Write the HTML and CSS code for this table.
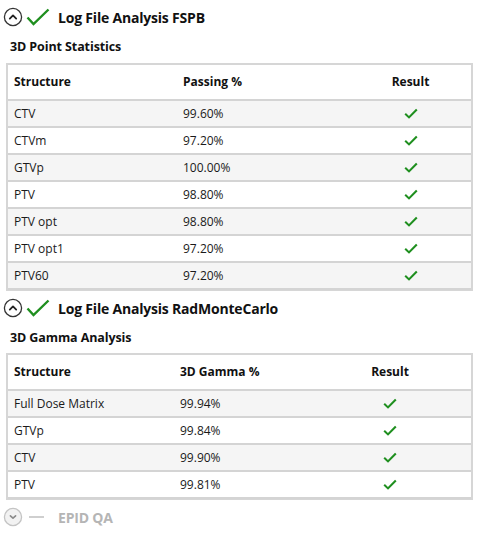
FILE: index.html
```html
<!DOCTYPE html>
<html>
<head>
<meta charset="utf-8">
<link rel="stylesheet" href="styles.css">
</head>
<body>
<div class="page">
  <div class="section-head">
    <svg class="toggle" width="20" height="20" viewBox="0 0 20 20"><circle cx="10" cy="10" r="8.6" fill="none" stroke="#333" stroke-width="1.3"/><path d="M6.8 11.6 L10 8.4 L13.2 11.6" fill="none" stroke="#222" stroke-width="1.8" stroke-linecap="round" stroke-linejoin="round"/></svg>
    <svg class="bigcheck" width="24" height="18" viewBox="0 0 24 18"><path d="M1.5 9.5 L7.5 16 L22.5 1.5" fill="none" stroke="#1f8f1f" stroke-width="2.4"/></svg>
    <span class="title">Log File Analysis FSPB</span>
  </div>
  <div class="subtitle">3D Point Statistics</div>
  <div class="table t1">
    <div class="row head"><div class="c1">Structure</div><div class="c2">Passing %</div><div class="c3">Result</div></div>
    <div class="row"><div class="c1">CTV</div><div class="c2">99.60%</div><div class="c3"><svg class="chk" width="14" height="11" viewBox="0 0 14 11"><path d="M1.2 5.8 L5 9.4 L12.8 1.4" fill="none" stroke="#1f8f1f" stroke-width="2.1"/></svg></div></div>
    <div class="row"><div class="c1">CTVm</div><div class="c2">97.20%</div><div class="c3"><svg class="chk" width="14" height="11" viewBox="0 0 14 11"><path d="M1.2 5.8 L5 9.4 L12.8 1.4" fill="none" stroke="#1f8f1f" stroke-width="2.1"/></svg></div></div>
    <div class="row"><div class="c1">GTVp</div><div class="c2">100.00%</div><div class="c3"><svg class="chk" width="14" height="11" viewBox="0 0 14 11"><path d="M1.2 5.8 L5 9.4 L12.8 1.4" fill="none" stroke="#1f8f1f" stroke-width="2.1"/></svg></div></div>
    <div class="row"><div class="c1">PTV</div><div class="c2">98.80%</div><div class="c3"><svg class="chk" width="14" height="11" viewBox="0 0 14 11"><path d="M1.2 5.8 L5 9.4 L12.8 1.4" fill="none" stroke="#1f8f1f" stroke-width="2.1"/></svg></div></div>
    <div class="row"><div class="c1">PTV opt</div><div class="c2">98.80%</div><div class="c3"><svg class="chk" width="14" height="11" viewBox="0 0 14 11"><path d="M1.2 5.8 L5 9.4 L12.8 1.4" fill="none" stroke="#1f8f1f" stroke-width="2.1"/></svg></div></div>
    <div class="row"><div class="c1">PTV opt1</div><div class="c2">97.20%</div><div class="c3"><svg class="chk" width="14" height="11" viewBox="0 0 14 11"><path d="M1.2 5.8 L5 9.4 L12.8 1.4" fill="none" stroke="#1f8f1f" stroke-width="2.1"/></svg></div></div>
    <div class="row"><div class="c1">PTV60</div><div class="c2">97.20%</div><div class="c3"><svg class="chk" width="14" height="11" viewBox="0 0 14 11"><path d="M1.2 5.8 L5 9.4 L12.8 1.4" fill="none" stroke="#1f8f1f" stroke-width="2.1"/></svg></div></div>
  </div>

  <div class="section-head second">
    <svg class="toggle" width="20" height="20" viewBox="0 0 20 20"><circle cx="10" cy="10" r="8.6" fill="none" stroke="#333" stroke-width="1.3"/><path d="M6.8 11.6 L10 8.4 L13.2 11.6" fill="none" stroke="#222" stroke-width="1.8" stroke-linecap="round" stroke-linejoin="round"/></svg>
    <svg class="bigcheck" width="24" height="18" viewBox="0 0 24 18"><path d="M1.5 9.5 L7.5 16 L22.5 1.5" fill="none" stroke="#1f8f1f" stroke-width="2.4"/></svg>
    <span class="title">Log File Analysis RadMonteCarlo</span>
  </div>
  <div class="subtitle">3D Gamma Analysis</div>
  <div class="table t2">
    <div class="row head"><div class="c1">Structure</div><div class="c2">3D Gamma %</div><div class="c3">Result</div></div>
    <div class="row"><div class="c1">Full Dose Matrix</div><div class="c2">99.94%</div><div class="c3"><svg class="chk" width="14" height="11" viewBox="0 0 14 11"><path d="M1.2 5.8 L5 9.4 L12.8 1.4" fill="none" stroke="#1f8f1f" stroke-width="2.1"/></svg></div></div>
    <div class="row"><div class="c1">GTVp</div><div class="c2">99.84%</div><div class="c3"><svg class="chk" width="14" height="11" viewBox="0 0 14 11"><path d="M1.2 5.8 L5 9.4 L12.8 1.4" fill="none" stroke="#1f8f1f" stroke-width="2.1"/></svg></div></div>
    <div class="row"><div class="c1">CTV</div><div class="c2">99.90%</div><div class="c3"><svg class="chk" width="14" height="11" viewBox="0 0 14 11"><path d="M1.2 5.8 L5 9.4 L12.8 1.4" fill="none" stroke="#1f8f1f" stroke-width="2.1"/></svg></div></div>
    <div class="row"><div class="c1">PTV</div><div class="c2">99.81%</div><div class="c3"><svg class="chk" width="14" height="11" viewBox="0 0 14 11"><path d="M1.2 5.8 L5 9.4 L12.8 1.4" fill="none" stroke="#1f8f1f" stroke-width="2.1"/></svg></div></div>
  </div>

  <div class="section-head third disabled">
    <svg class="toggle" width="20" height="20" viewBox="0 0 20 20"><circle cx="10" cy="10" r="8.6" fill="#f2f2f2" stroke="#c4c4c4" stroke-width="1.3"/><path d="M7.4 8.8 L10 11.2 L12.6 8.8" fill="none" stroke="#8a8a8a" stroke-width="1.6" stroke-linecap="round" stroke-linejoin="round"/></svg>
    <svg class="dash" width="24" height="18" viewBox="0 0 24 18"><path d="M3 9 L18 9" stroke="#c4c4c4" stroke-width="1.6"/></svg>
    <span class="title">EPID QA</span>
  </div>
</div>
</body>
</html>
```
FILE: styles.css
```css
html, body {
  margin: 0;
  padding: 0;
  background: #ffffff;
}
body {
  font-family: "Open Sans", "Noto Sans", "Liberation Sans", sans-serif;
  color: #1a1a1a;
  font-size: 12px;
}
.page {
  padding: 7px 6px 0 3px;
  width: 472px;
}
.section-head {
  display: flex;
  align-items: center;
  height: 20px;
}
.section-head .toggle {
  flex: none;
}
.section-head .bigcheck, .section-head .dash {
  flex: none;
  margin-left: 3px;
}
.section-head .title {
  margin-left: 8px;
  font-weight: 700;
  font-size: 14px;
  letter-spacing: -0.2px;
  color: #111;
}
.section-head.second {
  margin-top: 7px;
}
.section-head.third {
  margin-top: 7px;
}
.section-head.disabled .title {
  color: #b5b5b5;
}
.subtitle {
  font-weight: 700;
  font-size: 12.5px;
  letter-spacing: -0.1px;
  margin: 10px 0 0 7px;
  height: 19px;
  line-height: 19px;
  color: #111;
}
.table {
  margin: 7px 0 0 3px;
  width: 467px;
  box-sizing: border-box;
  border: 2px solid #d6d6d6;
  border-bottom-width: 1px;
}
.t2 {
  margin-top: 6px;
}
.row {
  display: grid;
  height: 27px;
  align-items: center;
  border-bottom: 2px solid #d4d4d4;
  box-sizing: border-box;
}
.row:nth-child(even) {
  background: #f5f5f5;
}
.row.head {
  height: 36px;
  padding-bottom: 2px;
  font-weight: 700;
  color: #111;
}
.t1 .row {
  grid-template-columns: 175px 167px 1fr;
}
.t2 .row {
  grid-template-columns: 172px 129px 1fr;
}
.c1 {
  padding-left: 6px;
}
.c3 {
  text-align: center;
  display: flex;
  justify-content: center;
}
.chk {
  display: block;
}
```
